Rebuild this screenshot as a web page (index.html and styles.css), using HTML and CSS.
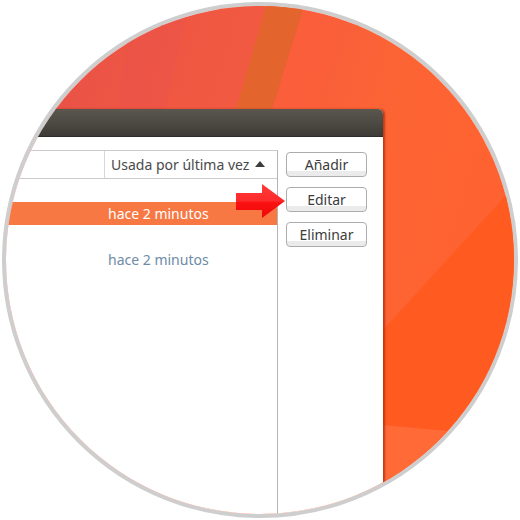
FILE: index.html
```html
<!DOCTYPE html>
<html lang="es">
<head>
    <meta charset="UTF-8">
    <meta name="viewport" content="width=device-width, initial-scale=1.0">
    <title>Editar conexiones</title>
    <link rel="stylesheet" href="styles.css">
</head>
<body>
    <div class="lens">
        <!-- desktop wallpaper, drawn in page coordinates -->
        <svg class="wallpaper" width="508" height="508" viewBox="6 6 508 508">
            <defs>
                <linearGradient id="wallBase" x1="0" y1="0" x2="1" y2="0.3">
                    <stop offset="0" stop-color="#e44e4a"/>
                    <stop offset="0.45" stop-color="#f45a40"/>
                    <stop offset="0.75" stop-color="#fd6434"/>
                    <stop offset="1" stop-color="#ff6230"/>
                </linearGradient>
            </defs>
            <rect x="0" y="0" width="520" height="520" fill="url(#wallBase)"/>
            <polygon points="130,0 190,0 165,110 120,110" fill="#eb5449" opacity="0.6"/>
            <polygon points="190,0 272,0 236,110 175,110" fill="#f05843" opacity="0.5"/>
            <polygon points="268,0 306,0 272,109 236,109" fill="#e3642d"/>
            <polygon points="306,0 345,0 320,109 272,109" fill="#fb5f3a" opacity="0.6"/>
            <polygon points="383,330 520,180 520,520 383,520" fill="#ff5a20"/>
            <polygon points="383,425 470,433 520,448 520,520 383,520" fill="#ff6a37"/>
        </svg>

        <div class="window">
            <div class="titlebar"></div>
            <div class="window-body">
                <div class="tree">
                    <div class="tree-header">
                        <div class="col-head"></div>
                        <div class="col-head sorted">Usada por última vez <span class="sort-arrow"></span></div>
                    </div>
                    <div class="row"><div class="cell"></div><div class="cell"></div></div>
                    <div class="row selected"><div class="cell"></div><div class="cell">hace 2 minutos</div></div>
                    <div class="row"><div class="cell"></div><div class="cell"></div></div>
                    <div class="row child"><div class="cell"></div><div class="cell">hace 2 minutos</div></div>
                </div>
                <div class="actions">
                    <button class="btn">Añadir</button>
                    <button class="btn">Editar</button>
                    <button class="btn">Eliminar</button>
                </div>
            </div>
        </div>

        <svg class="pointer" width="52" height="38" viewBox="234 182 52 38">
            <defs>
                <linearGradient id="arrowFill" x1="0" y1="0" x2="0" y2="1">
                    <stop offset="0" stop-color="#ff3b3b"/>
                    <stop offset="0.5" stop-color="#ff2a2a"/>
                    <stop offset="0.55" stop-color="#fb1010"/>
                    <stop offset="1" stop-color="#ee0a0a"/>
                </linearGradient>
            </defs>
            <polygon points="236,193 262,193 262,184 285,201 262,218 262,210 236,210" fill="url(#arrowFill)"/>
        </svg>
    </div>
</body>
</html>
```

FILE: styles.css
```css
body {
    margin: 0;
    background-color: #ffffff;
    font-family: "Noto Sans", "DejaVu Sans", sans-serif;
}
.lens {
    position: relative;
    width: 508px;
    height: 508px;
    margin: 2px 0 0 2px;
    border: 4px solid #cecece;
    border-radius: 50%;
    overflow: hidden;
    background-color: #ffffff;
}
.wallpaper {
    position: absolute;
    left: 0;
    top: 0;
}
.window {
    position: relative;
    width: 407px;
    height: 480px;
    margin: 103px 0 0 -30px;
    background-color: #ffffff;
    border-top-right-radius: 5px;
    box-shadow: 2px 0 2px rgba(170, 40, 10, 0.7);
}
.titlebar {
    height: 27px;
    background: linear-gradient(#5b574f, #4a4741 60%, #3d3b37);
    border-bottom: 1px solid #2d2c29;
    border-top-right-radius: 5px;
}
.window-body {
    display: flex;
    gap: 8px;
    padding: 13px 16px 0 0;
}
.tree {
    flex: 1;
    height: 400px;
    border-top: 1px solid #cbcbcb;
    border-right: 1px solid #b4b4b4;
    font-size: 14px;
}
.tree-header {
    display: grid;
    grid-template-columns: 129px 1fr;
    height: 27px;
    border-bottom: 1px solid #cbcbcb;
}
.col-head {
    display: flex;
    align-items: center;
    padding-left: 6px;
    color: #4a4a4a;
}
.col-head:first-child {
    border-right: 1px solid #d6d6d6;
}
.sort-arrow {
    width: 0;
    height: 0;
    margin-left: 6px;
    border-left: 5px solid transparent;
    border-right: 5px solid transparent;
    border-bottom: 6px solid #3c3c3c;
    margin-bottom: 2px;
}
.row {
    display: grid;
    grid-template-columns: 129px 1fr;
    height: 23px;
    line-height: 23px;
}
.row .cell:last-child {
    padding-left: 3px;
}
.row.selected {
    background-color: #f77843;
    color: #ffffff;
}
.row.child {
    color: #6d8ba6;
}
.actions {
    display: flex;
    flex-direction: column;
    gap: 10px;
    padding-top: 2px;
}
.btn {
    width: 81px;
    height: 25px;
    padding: 0;
    border: 1px solid #acacac;
    border-radius: 4px;
    background: linear-gradient(#ffffff 78%, #ebebeb 78%);
    background-clip: padding-box;
    color: #3c3c3c;
    font-family: "Noto Sans", "DejaVu Sans", sans-serif;
    font-size: 14px;
    line-height: 22px;
}
.pointer {
    position: absolute;
    left: 228px;
    top: 176px;
}
```
